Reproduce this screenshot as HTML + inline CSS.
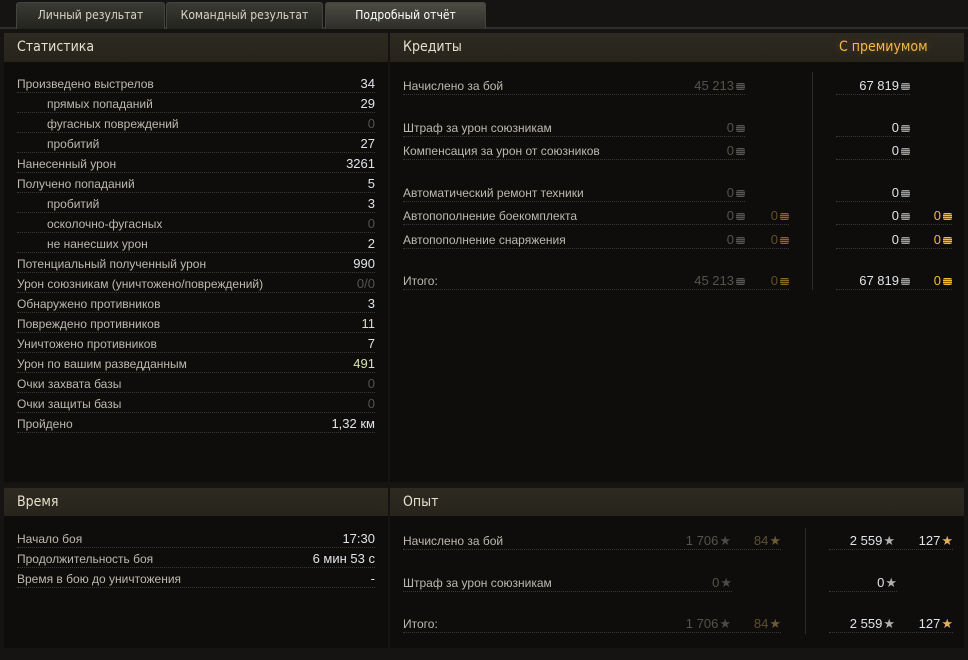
<!DOCTYPE html>
<html><head><meta charset="utf-8"><style>
body{margin:0;width:968px;height:660px;background:#151412;font-family:"Liberation Sans",sans-serif;font-size:12px;color:#bdb9ae;position:relative;overflow:hidden}
.a{position:absolute}
.tab{position:absolute;top:2px;height:26px;line-height:25px;text-align:center;font-size:12px;color:#d8d4c4;background:linear-gradient(#3a3a34,#24241f);border:1px solid #44443c;border-bottom:none;border-radius:3px 3px 0 0;font-family:"DejaVu Sans Condensed","Liberation Sans Narrow","Liberation Sans",sans-serif}
.tab.on{background:linear-gradient(#4c4c44,#2e2e28);color:#fff}
.hd{position:absolute;background:linear-gradient(#2d2a21,#27241c);color:#e6e0cc;font-size:14px;line-height:28px;padding-left:13px;box-sizing:border-box;font-family:"DejaVu Sans Condensed","Liberation Sans Narrow","Liberation Sans",sans-serif}
.bd{position:absolute;background:#0e0d0b}
.r{position:absolute;height:16px;line-height:16px;border-bottom:1px dotted #3a3933;box-sizing:content-box;white-space:nowrap}
.v{position:absolute;right:0;top:0;color:#dfe4ea;font-size:13px}
.g{color:#55534e}
.gd{color:#5e5030}
.y{color:#f2c21e}
.c{display:inline-block;width:9px;height:7px;margin-left:2px;vertical-align:-0px;background:repeating-linear-gradient(#9a9a9a 0 1px,#555 1px 2px);border-radius:2px}
.c.d{background:repeating-linear-gradient(#555 0 1px,#2a2a2a 1px 2px)}
.c.o{background:repeating-linear-gradient(#f0c030 0 1px,#8a5a10 1px 2px)}
.c.od{background:repeating-linear-gradient(#8a6a20 0 1px,#3a2a08 1px 2px)}
.s{font-size:13px;margin-left:1px;color:#b0b0b0}
</style></head><body>
<div class="a" style="left:0;top:27px;width:968px;height:2px;background:#2e2e2a"></div>
<div class="tab" style="left:16px;width:147px">Личный результат</div>
<div class="tab" style="left:166px;width:155px">Командный результат</div>
<div class="tab on" style="left:325px;width:159px">Подробный отчёт</div>

<div class="hd" style="left:4px;top:33px;width:384px;height:29px">Статистика</div>
<div class="hd" style="left:390px;top:33px;width:574px;height:29px">Кредиты<span style="position:absolute;left:449px;color:#f2b84a;text-shadow:0 0 8px #6a4a10">С премиумом</span></div>
<div class="bd" style="left:4px;top:62px;width:384px;height:420px"></div>
<div class="bd" style="left:390px;top:62px;width:574px;height:420px"></div>
<div class="hd" style="left:4px;top:488px;width:384px;height:28px">Время</div>
<div class="hd" style="left:390px;top:488px;width:574px;height:28px">Опыт</div>
<div class="bd" style="left:4px;top:516px;width:384px;height:132px"></div>
<div class="bd" style="left:390px;top:516px;width:574px;height:132px"></div>
<div class="a" style="left:812px;top:72px;width:1px;height:218px;background:#2c2b27"></div>
<div class="a" style="left:805px;top:528px;width:1px;height:106px;background:#2c2b27"></div>

<div class="r" style="left:17px;top:76px;width:358px">Произведено выстрелов<span class="v">34</span></div>
<div class="r" style="left:17px;top:96px;width:358px"><span style="margin-left:30px">прямых попаданий</span><span class="v">29</span></div>
<div class="r" style="left:17px;top:116px;width:358px"><span style="margin-left:30px">фугасных повреждений</span><span class="v g">0</span></div>
<div class="r" style="left:17px;top:136px;width:358px"><span style="margin-left:30px">пробитий</span><span class="v">27</span></div>
<div class="r" style="left:17px;top:156px;width:358px">Нанесенный урон<span class="v">3261</span></div>
<div class="r" style="left:17px;top:176px;width:358px">Получено попаданий<span class="v">5</span></div>
<div class="r" style="left:17px;top:196px;width:358px"><span style="margin-left:30px">пробитий</span><span class="v">3</span></div>
<div class="r" style="left:17px;top:216px;width:358px"><span style="margin-left:30px">осколочно-фугасных</span><span class="v g">0</span></div>
<div class="r" style="left:17px;top:236px;width:358px"><span style="margin-left:30px">не нанесших урон</span><span class="v">2</span></div>
<div class="r" style="left:17px;top:256px;width:358px">Потенциальный полученный урон<span class="v">990</span></div>
<div class="r" style="left:17px;top:276px;width:358px">Урон союзникам (уничтожено/повреждений)<span class="v g">0/0</span></div>
<div class="r" style="left:17px;top:296px;width:358px">Обнаружено противников<span class="v">3</span></div>
<div class="r" style="left:17px;top:316px;width:358px">Повреждено противников<span class="v" style="color:#d8e4b0">11</span></div>
<div class="r" style="left:17px;top:336px;width:358px">Уничтожено противников<span class="v">7</span></div>
<div class="r" style="left:17px;top:356px;width:358px">Урон по вашим разведданным<span class="v" style="color:#d8e4b0">491</span></div>
<div class="r" style="left:17px;top:376px;width:358px">Очки захвата базы<span class="v g">0</span></div>
<div class="r" style="left:17px;top:396px;width:358px">Очки защиты базы<span class="v g">0</span></div>
<div class="r" style="left:17px;top:416px;width:358px">Пройдено<span class="v">1,32 км</span></div>

<div class="r" style="left:17px;top:531px;width:358px">Начало боя<span class="v">17:30</span></div>
<div class="r" style="left:17px;top:551px;width:358px">Продолжительность боя<span class="v">6 мин 53 с</span></div>
<div class="r" style="left:17px;top:571px;width:358px">Время в бою до уничтожения<span class="v">-</span></div>

<div class="r" style="left:403px;top:78px;width:342px">Начислено за бой<span class="v g">45 213<i class="c d"></i></span></div>
<div class="r" style="left:836px;top:78px;width:74px"><span class="v">67 819<i class="c"></i></span></div>
<div class="r" style="left:403px;top:120px;width:342px">Штраф за урон союзникам<span class="v g">0<i class="c d"></i></span></div>
<div class="r" style="left:836px;top:120px;width:74px"><span class="v">0<i class="c"></i></span></div>
<div class="r" style="left:403px;top:143px;width:342px">Компенсация за урон от союзников<span class="v g">0<i class="c d"></i></span></div>
<div class="r" style="left:836px;top:143px;width:74px"><span class="v">0<i class="c"></i></span></div>
<div class="r" style="left:403px;top:185px;width:342px">Автоматический ремонт техники<span class="v g">0<i class="c d"></i></span></div>
<div class="r" style="left:836px;top:185px;width:74px"><span class="v">0<i class="c"></i></span></div>

<div class="r" style="left:403px;top:208px;width:386px">Автопополнение боекомплекта<span class="v g" style="right:44px">0<i class="c d"></i></span><span class="v gd">0<i class="c od"></i></span></div>
<div class="r" style="left:836px;top:208px;width:116px"><span class="v" style="right:42px">0<i class="c"></i></span><span class="v y">0<i class="c o"></i></span></div>
<div class="r" style="left:403px;top:232px;width:386px">Автопополнение снаряжения<span class="v g" style="right:44px">0<i class="c d"></i></span><span class="v gd">0<i class="c od"></i></span></div>
<div class="r" style="left:836px;top:232px;width:116px"><span class="v" style="right:42px">0<i class="c"></i></span><span class="v y">0<i class="c o"></i></span></div>
<div class="r" style="left:403px;top:273px;width:386px">Итого:<span class="v g" style="right:44px">45 213<i class="c d"></i></span><span class="v gd">0<i class="c od"></i></span></div>
<div class="r" style="left:836px;top:273px;width:116px"><span class="v" style="right:42px">67 819<i class="c"></i></span><span class="v y">0<i class="c o"></i></span></div>

<div class="r" style="left:403px;top:533px;width:378px">Начислено за бой<span class="v g" style="right:50px">1 706<span class="s" style="color:#4a4a48">★</span></span><span class="v gd">84<span class="s" style="color:#6b5a36">★</span></span></div>
<div class="r" style="left:829px;top:533px;width:124px"><span class="v" style="right:58px">2 559<span class="s">★</span></span><span class="v">127<span class="s" style="color:#e0b060">★</span></span></div>
<div class="r" style="left:403px;top:575px;width:329px">Штраф за урон союзникам<span class="v g">0<span class="s" style="color:#4a4a48">★</span></span></div>
<div class="r" style="left:829px;top:575px;width:68px"><span class="v">0<span class="s">★</span></span></div>
<div class="r" style="left:403px;top:616px;width:378px">Итого:<span class="v g" style="right:50px">1 706<span class="s" style="color:#4a4a48">★</span></span><span class="v gd">84<span class="s" style="color:#6b5a36">★</span></span></div>
<div class="r" style="left:829px;top:616px;width:124px"><span class="v" style="right:58px">2 559<span class="s">★</span></span><span class="v">127<span class="s" style="color:#e0b060">★</span></span></div>
</body></html>
